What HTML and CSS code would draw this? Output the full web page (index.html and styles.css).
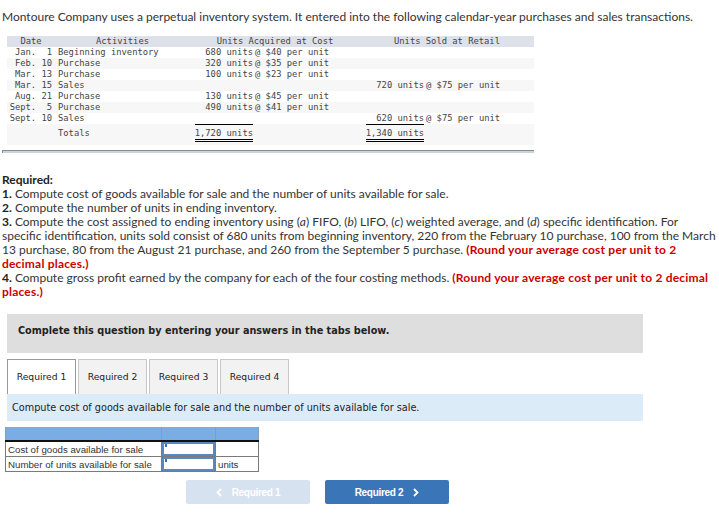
FILE: index.html
```html
<!DOCTYPE html>
<html>
<head>
    <title>Montoure Company</title>
    <link rel="stylesheet" href="styles.css">
</head>
<body>
    <p class="intro">Montoure Company uses a perpetual inventory system. It entered into the following calendar-year purchases and sales transactions.</p>

    <table class="data">
        <colgroup>
            <col class="c-date"><col class="c-act"><col class="c-qty1"><col class="c-price1"><col class="c-qty2"><col class="c-price2">
        </colgroup>
        <thead>
            <tr><th>Date</th><th>Activities</th><th colspan="2">Units Acquired at Cost</th><th colspan="2">Units Sold at Retail</th></tr>
        </thead>
        <tbody>
            <tr><td class="date"> Jan.  1</td><td class="act">Beginning inventory</td><td class="qty">680 units</td><td class="price">@ $40 per unit</td><td></td><td></td></tr>
            <tr><td class="date"> Feb. 10</td><td class="act">Purchase</td><td class="qty">320 units</td><td class="price">@ $35 per unit</td><td></td><td></td></tr>
            <tr><td class="date"> Mar. 13</td><td class="act">Purchase</td><td class="qty">100 units</td><td class="price">@ $23 per unit</td><td></td><td></td></tr>
            <tr><td class="date"> Mar. 15</td><td class="act">Sales</td><td></td><td></td><td class="qty">720 units</td><td class="price">@ $75 per unit</td></tr>
            <tr><td class="date"> Aug. 21</td><td class="act">Purchase</td><td class="qty">130 units</td><td class="price">@ $45 per unit</td><td></td><td></td></tr>
            <tr><td class="date">Sept.  5</td><td class="act">Purchase</td><td class="qty">490 units</td><td class="price">@ $41 per unit</td><td></td><td></td></tr>
            <tr><td class="date">Sept. 10</td><td class="act">Sales</td><td></td><td></td><td class="qty">620 units</td><td class="price">@ $75 per unit</td></tr>
            <tr class="totals"><td></td><td class="act">Totals</td><td class="qty"><span class="sum">1,720 units</span></td><td></td><td class="qty"><span class="sum">1,340 units</span></td><td></td></tr>
        </tbody>
    </table>
    <div class="rule"></div>

    <div class="required">
        <p class="req-title">Required:</p>
        <p><b>1.</b> Compute cost of goods available for sale and the number of units available for sale.</p>
        <p><b>2.</b> Compute the number of units in ending inventory.</p>
        <p><b>3.</b> Compute the cost assigned to ending inventory using (<i>a</i>) FIFO, (<i>b</i>) LIFO, (<i>c</i>) weighted average, and (<i>d</i>) specific identification. For specific identification, units sold consist of 680 units from beginning inventory, 220 from the February 10 purchase, 100 from the March 13 purchase, 80 from the August 21 purchase, and 260 from the September 5 purchase. <span class="note">(Round your average cost per unit to 2 decimal places.)</span></p>
        <p><b>4.</b> Compute gross profit earned by the company for each of the four costing methods. <span class="note">(Round your average cost per unit to 2 decimal places.)</span></p>
    </div>

    <div class="instructions">Complete this question by entering your answers in the tabs below.</div>

    <div class="tabs">
        <div class="tab active">Required 1</div>
        <div class="tab">Required 2</div>
        <div class="tab">Required 3</div>
        <div class="tab">Required 4</div>
    </div>
    <div class="tab-info">Compute cost of goods available for sale and the number of units available for sale.</div>

    <table class="answer">
        <colgroup><col class="a-label"><col class="a-input"><col class="a-unit"></colgroup>
        <tr class="head"><td></td><td></td><td></td></tr>
        <tr class="first"><td>Cost of goods available for sale</td><td class="field"><span class="box"></span></td><td></td></tr>
        <tr><td>Number of units available for sale</td><td class="field"><span class="box"></span></td><td class="unit">units</td></tr>
    </table>

    <div class="nav">
        <button class="btn prev" type="button">
            <svg width="6" height="9" viewBox="0 0 6 9"><polyline points="5,1 1.5,4.5 5,8" fill="none" stroke="#fff" stroke-width="1.8"/></svg>
            Required 1
        </button>
        <button class="btn next" type="button">
            Required 2
            <svg width="6" height="9" viewBox="0 0 6 9"><polyline points="1,1 4.5,4.5 1,8" fill="none" stroke="#fff" stroke-width="1.8"/></svg>
        </button>
    </div>
</body>
</html>
```

FILE: styles.css
```css
body {
    margin: 0;
    padding: 0 2px;
    background-color: #fff;
    font-family: Lato, "Open Sans", sans-serif;
    font-size: 12px;
    color: #333;
}

p {
    margin: 0;
}

.intro {
    margin-top: 10px;
    line-height: 14px;
}

/* transactions table */
.data {
    margin: 12px 0 0 5px;
    width: 527px;
    table-layout: fixed;
    border-collapse: collapse;
    font-family: "DejaVu Sans Mono", "Liberation Mono", monospace;
    font-size: 8.8px;
    color: #444;
}

.c-date { width: 48px; }
.c-act { width: 135px; }
.c-qty1 { width: 63px; }
.c-price1 { width: 107px; }
.c-qty2 { width: 64px; }
.c-price2 { width: 110px; }

.data th {
    background-color: #dde1e9;
    font-weight: normal;
    height: 11px;
    line-height: 11px;
    padding: 0;
}

.data td {
    height: 11px;
    line-height: 11px;
    padding: 0;
    white-space: pre;
}

.data tbody tr:nth-child(even) {
    background-color: #f7f7f7;
}

.data .date {
    text-align: right;
    padding-right: 3px;
}

.data .act {
    padding-left: 3px;
}

.data .qty {
    text-align: right;
}

.data .price {
    padding-left: 2px;
}

.data .totals td {
    height: 18px;
    vertical-align: top;
}

.data .totals .act {
    padding-top: 3px;
    line-height: 12px;
}

.sum {
    display: inline-block;
    border-top: 1px solid #000;
    border-bottom: 3px double #000;
    padding-top: 2px;
    line-height: 12px;
}

.rule {
    margin-top: 5px;
    width: 531px;
    height: 2px;
    background-color: #cdd3de;
    border-top: 1px solid #8c8c8c;
    border-left: 1px solid #8c8c8c;
}

/* question text */
.required {
    margin-top: 20px;
    line-height: 14px;
}

.required b,
.req-title {
    font-weight: bold;
    color: #222;
}

.note {
    color: #c00;
    font-weight: bold;
    letter-spacing: 0.2px;
}

.instructions {
    margin: 15px 0 0 5px;
    width: 625px;
    height: 28px;
    padding: 11px 0 0 11px;
    background-color: #dedede;
    font-family: "DejaVu Sans", Verdana, sans-serif;
    font-size: 9.7px;
    font-weight: bold;
    color: #222;
}

/* tabs */
.tabs {
    display: flex;
    gap: 2px;
    margin: 6px 0 0 5px;
}

.tab {
    width: 67px;
    height: 34px;
    line-height: 34px;
    border: 1px solid #c8c8c8;
    border-bottom: none;
    background-color: #f2f2f2;
    text-align: center;
    font-family: "DejaVu Sans", Verdana, sans-serif;
    font-size: 9.2px;
    color: #222;
}

.tab.active {
    background-color: #fff;
    border-color: #999;
}

.tab-info {
    margin-left: 5px;
    width: 631px;
    height: 27px;
    line-height: 27px;
    padding-left: 5px;
    background-color: #dcebf8;
    font-family: "DejaVu Sans", Verdana, sans-serif;
    font-size: 9.7px;
    color: #222;
}

/* answer grid */
.answer {
    margin: 6px 0 0 3px;
    width: 253px;
    table-layout: fixed;
    border-collapse: collapse;
    font-family: "Liberation Sans", Arial, sans-serif;
    font-size: 9.7px;
    color: #333;
}

.a-label { width: 156px; }
.a-input { width: 54px; }
.a-unit { width: 43px; }

.answer td {
    border: 1px solid #7a7a7a;
    height: 13px;
    padding: 0 0 0 2px;
    white-space: nowrap;
}

.answer .head td {
    background-color: #79ade4;
    border-color: #8c9bb0;
    border-top: none;
    border-bottom: 2px solid #111;
}

.answer .field {
    padding: 0;
    position: relative;
}

.box {
    display: block;
    height: 10px;
    border: 2px solid #5a87bf;
}

.field::before {
    content: "";
    position: absolute;
    left: 3px;
    top: 2px;
    width: 2px;
    height: 3px;
    background-color: #2f6fc0;
}

/* navigation */
.nav {
    display: flex;
    gap: 15px;
    margin: 8px 0 0 184px;
}

.btn {
    width: 124px;
    height: 24px;
    border: none;
    border-radius: 2px;
    color: #fff;
    font-family: "Liberation Sans", Arial, sans-serif;
    font-size: 10px;
    font-weight: bold;
    letter-spacing: -0.3px;
    display: flex;
    align-items: center;
    justify-content: center;
    gap: 10px;
}

.btn.prev {
    background-color: #d7e2f0;
}

.btn.next {
    background-color: #3a75b8;
}
```
